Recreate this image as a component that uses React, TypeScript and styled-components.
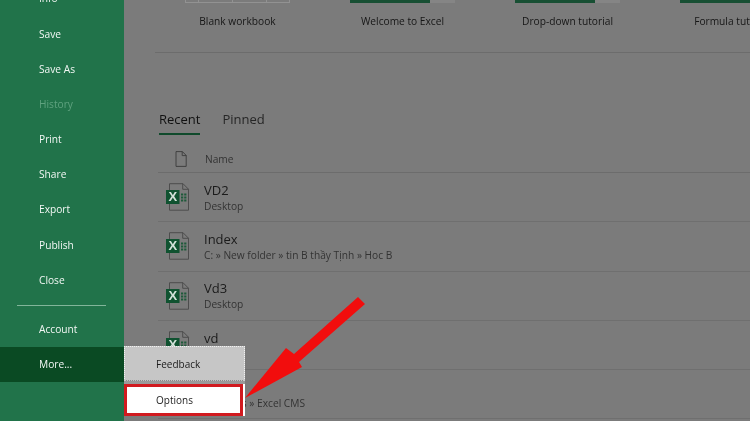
import React from "react";
import styled, { createGlobalStyle } from "styled-components";

const GlobalStyle = createGlobalStyle`
  html, body {
    margin: 0;
    padding: 0;
    background: #7b7b7b;
  }
  body {
    font-family: "Open Sans", "Noto Sans", sans-serif;
  }
`;

const Page = styled.div`
  position: relative;
  display: flex;
  width: 750px;
  height: 421px;
  overflow: hidden;
  filter: blur(0.3px);
`;

const Sidebar = styled.nav`
  flex: 0 0 124px;
  display: flex;
  flex-direction: column;
  background: #21734a;
`;

const NavList = styled.div`
  display: flex;
  flex-direction: column;
  margin-top: -18.7px;
`;

const NavItem = styled.div<{ $muted?: boolean; $active?: boolean }>`
  height: 35.2px;
  line-height: 35.2px;
  padding-left: 39px;
  font-size: 10.2px;
  font-weight: 500;
  color: ${(p) => (p.$muted ? "#5fa27f" : "#f2f7f4")};
  background: ${(p) => (p.$active ? "#0a4a23" : "transparent")};
`;

const NavRule = styled.div`
  height: 1px;
  margin: 7px 18px 5.5px 17px;
  background: #82b59a;
`;

const Main = styled.main`
  flex: 1;
  min-width: 0;
  display: flex;
  flex-direction: column;
  background: #7b7b7b;
  color: #1f1f1f;
`;

const Templates = styled.section`
  display: flex;
  height: 53px;
  box-sizing: border-box;
  margin-left: 31px;
  width: 660px;
  flex-shrink: 0;
  border-bottom: 1px solid #6c6c6c;
`;

const Template = styled.div`
  flex: 0 0 165px;
  display: flex;
  flex-direction: column;
  align-items: center;
`;

const Thumb = styled.div`
  display: flex;
  width: 105px;
  height: 3px;
  background: #858585;
`;

const ThumbBar = styled.div`
  width: 80px;
  background: #174f33;
`;

const BlankThumb = styled.div`
  display: grid;
  grid-template-columns: 13px 34px 34px 24px;
  width: 105px;
  height: 3px;
  box-sizing: border-box;
  border-bottom: 1px solid #929292;
`;

const BlankCell = styled.div`
  border-left: 1px solid #929292;
  &:last-child {
    border-right: 1px solid #929292;
  }
`;

const TemplateName = styled.div`
  margin-top: 11px;
  font-size: 10.2px;
  font-weight: 500;
  line-height: 14px;
  white-space: nowrap;
  color: #161616;
`;

const Recent = styled.section`
  flex: 1;
  display: flex;
  flex-direction: column;
  margin: 0 0 0 34px;
  min-width: 0;
`;

const Tabs = styled.div`
  display: flex;
  gap: 22px;
  margin-top: 55px;
  padding-left: 1px;
`;

const Tab = styled.div<{ $active?: boolean }>`
  height: 27px;
  box-sizing: border-box;
  font-size: 13px;
  font-weight: 500;
  line-height: 22px;
  color: ${(p) => (p.$active ? "#111" : "#262626")};
  border-bottom: 2px solid ${(p) => (p.$active ? "#0f4a2b" : "transparent")};
`;

const HeaderRow = styled.div`
  display: flex;
  align-items: center;
  height: 38px;
  padding-top: 10px;
  box-sizing: border-box;
  border-bottom: 1px solid #6c6c6c;
  font-size: 10.2px;
  font-weight: 500;
  color: #333;
`;

const HeaderIcon = styled.div`
  flex: 0 0 47px;
  display: flex;
  justify-content: center;
  padding-right: 2px;
  box-sizing: border-box;
`;

const FileRow = styled.div`
  display: flex;
  align-items: center;
  height: 49.3px;
  box-sizing: border-box;
  border-bottom: 1px solid #6f6f6f;
`;

const FileIconCell = styled.div`
  flex: 0 0 46px;
  display: flex;
  padding-left: 8px;
  box-sizing: border-box;
`;

const FileText = styled.div`
  display: flex;
  flex-direction: column;
  min-width: 0;
`;

const FileName = styled.div`
  font-size: 13px;
  line-height: 17px;
  color: #1b1b1b;
`;

const FilePath = styled.div`
  font-size: 10.2px;
  font-weight: 500;
  line-height: 14px;
  color: #333;
  white-space: nowrap;
`;

const Popup = styled.div`
  position: absolute;
  left: 124px;
  top: 346px;
  width: 121px;
  display: flex;
  flex-direction: column;
  background: #9a9a9a;
`;

const PopupItem = styled.div`
  height: 35px;
  line-height: 35px;
  padding-left: 31px;
  box-sizing: border-box;
  font-size: 10px;
  font-weight: 500;
  color: #1c1c1c;
  background: #c6c6c6;
  border: 1px dotted #f2f2f2;
  border-bottom-color: #8a8a8a;
`;

const OptionsSlot = styled.div`
  margin-top: 3px;
  height: 32px;
  background: #ffffff;
`;

const OptionsItem = styled.div`
  width: 119px;
  height: 32px;
  line-height: 27px;
  padding-left: 29px;
  box-sizing: border-box;
  font-size: 10px;
  font-weight: 500;
  color: #1c1c1c;
  background: #fff;
  border: 3px solid #d11a1f;
`;

const Arrow = styled.svg`
  position: absolute;
  left: 0;
  top: 0;
  pointer-events: none;
`;

function BlankFileIcon() {
  return (
    <svg width="12" height="16" viewBox="0 0 12 16" fill="none">
      <path
        d="M1 .6h6.4L11.2 4.4v11H1z M7.2 .6v4h4"
        stroke="#3a3a3a"
        strokeWidth="0.9"
      />
    </svg>
  );
}

function ExcelIcon() {
  return (
    <svg width="24" height="28" viewBox="0 0 24 28">
      <path
        d="M3.5 7V.7h13.5l5.5 5.5v21H3.5V21"
        fill="none"
        stroke="#4d4d4d"
        strokeWidth="1"
      />
      <path d="M16.7.7v5.6h5.8" fill="none" stroke="#4d4d4d" strokeWidth="1" />
      <rect x="0" y="7" width="13.5" height="14" fill="#0f5230" />
      <text
        x="6.8"
        y="18.4"
        textAnchor="middle"
        fontSize="13"
        fontWeight="700"
        fontFamily="'Liberation Sans', sans-serif"
        fill="#d4e2da"
      >
        X
      </text>
      <path
        d="M15 10.5h2.2v2H15zM18.2 10.5h2.2v2h-2.2zM15 13.5h2.2v2H15zM18.2 13.5h2.2v2h-2.2zM15 16.5h2.2v2H15zM18.2 16.5h2.2v2h-2.2z"
        fill="#1e5a3a"
      />
    </svg>
  );
}

const navTop = ["Info", "Save", "Save As"];
const navMid = ["Print", "Share", "Export", "Publish", "Close"];
const templates = [
  "Blank workbook",
  "Welcome to Excel",
  "Drop-down tutorial",
  "Formula tutorial",
];
const files = [
  { name: "VD2", path: "Desktop" },
  { name: "Index", path: "C: » New folder » tin B thầy Tịnh » Hoc B" },
  { name: "Vd3", path: "Desktop" },
  { name: "vd", path: "Desktop" },
  { name: "CMS", path: "C: » Docs » Excel CMS" },
];

export default function App() {
  return (
    <>
      <GlobalStyle />
      <Page>
        <Sidebar>
          <NavList>
            {navTop.map((item) => (
              <NavItem key={item}>{item}</NavItem>
            ))}
            <NavItem $muted>History</NavItem>
            {navMid.map((item) => (
              <NavItem key={item}>{item}</NavItem>
            ))}
            <NavRule />
            <NavItem>Account</NavItem>
            <NavItem $active>More...</NavItem>
          </NavList>
        </Sidebar>
        <Main>
          <Templates>
            {templates.map((name, i) => (
              <Template key={name}>
                {i === 0 ? (
                  <BlankThumb>
                    <BlankCell />
                    <BlankCell />
                    <BlankCell />
                    <BlankCell />
                  </BlankThumb>
                ) : (
                  <Thumb>
                    <ThumbBar />
                  </Thumb>
                )}
                <TemplateName>{name}</TemplateName>
              </Template>
            ))}
          </Templates>
          <Recent>
            <Tabs>
              <Tab $active>Recent</Tab>
              <Tab>Pinned</Tab>
            </Tabs>
            <HeaderRow>
              <HeaderIcon>
                <BlankFileIcon />
              </HeaderIcon>
              Name
            </HeaderRow>
            {files.map((f) => (
              <FileRow key={f.name}>
                <FileIconCell>
                  <ExcelIcon />
                </FileIconCell>
                <FileText>
                  <FileName>{f.name}</FileName>
                  <FilePath>{f.path}</FilePath>
                </FileText>
              </FileRow>
            ))}
          </Recent>
        </Main>
        <Popup>
          <PopupItem>Feedback</PopupItem>
          <OptionsSlot>
            <OptionsItem>Options</OptionsItem>
          </OptionsSlot>
        </Popup>
        <Arrow width="750" height="421" viewBox="0 0 750 421">
          <path
            d="M245 398L286 348L294 354L358 297L365 304L299 362L302 367Z"
            fill="#f20d0d"
          />
        </Arrow>
      </Page>
    </>
  );
}
